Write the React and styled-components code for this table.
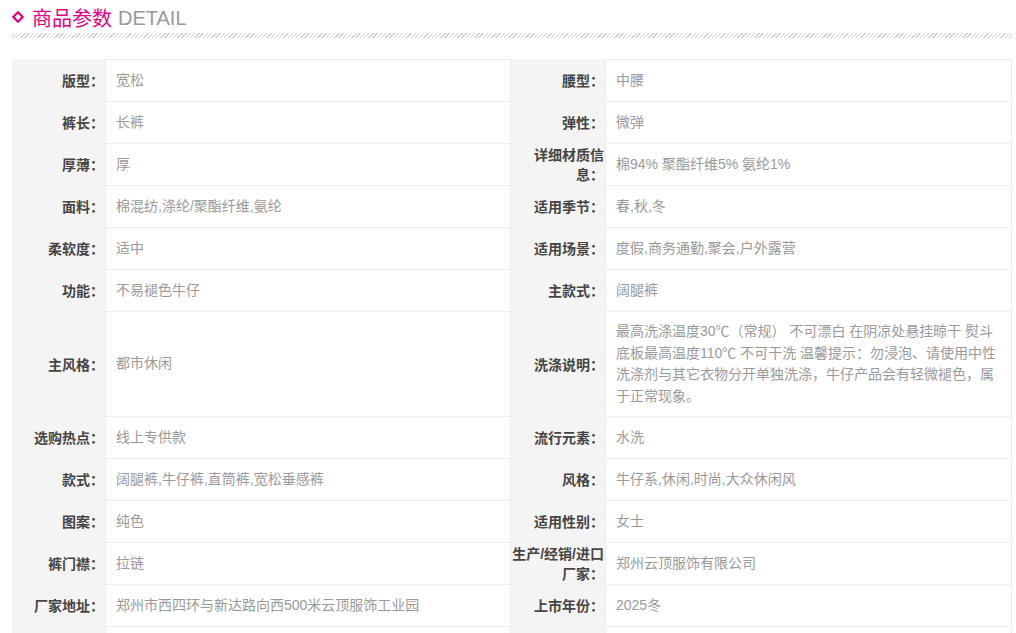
import React from "react";
import styled, { createGlobalStyle } from "styled-components";

const Global = createGlobalStyle`
  html, body { margin: 0; padding: 0; background: #fff; }
  body { font-family: "Liberation Sans", "Noto Sans CJK SC", sans-serif; }
`;

const Page = styled.div`
  padding: 6px 4px 0 12px;
  width: 1000px;
`;

const Header = styled.div`
  display: flex;
  align-items: center;
  height: 24px;
  font-size: 20px;
  line-height: 24px;
`;

const Diamond = styled.svg`
  width: 12px;
  height: 12px;
  margin: -2px 8px 0 0;
  flex: none;
`;

const Title = styled.span`
  color: #e4007f;
  font-family: "Noto Sans CJK SC", sans-serif;
`;

const Sub = styled.span`
  color: #999;
  margin-left: 6px;
  font-family: "Liberation Sans", sans-serif;
`;

const Hatch = styled.div`
  margin-top: 3px;
  height: 5px;
  background: repeating-linear-gradient(
    135deg,
    #cfcfcf 0,
    #cfcfcf 1px,
    transparent 1px,
    transparent 3px
  );
`;

const Grid = styled.div`
  margin-top: 21px;
  display: grid;
  grid-template-columns: 93px 406px 94px 407px;
  font-size: 14px;
`;

const Label = styled.div`
  box-sizing: border-box;
  min-height: ${(p) => (p.$first ? 43 : 42)}px;
  background: #f4f4f4;
  display: flex;
  align-items: center;
  justify-content: flex-end;
  padding: 0 1px 0 0;
  font-weight: bold;
  color: #454545;
  line-height: 20px;
  text-align: right;
`;

const Value = styled.div`
  box-sizing: border-box;
  min-height: ${(p) => (p.$first ? 43 : 42)}px;
  display: flex;
  align-items: center;
  padding: 9px 10px;
  border: 1px solid #ececec;
  border-top: ${(p) => (p.$first ? "1px solid #ececec" : "none")};
  color: #9a9a9a;
  line-height: 21.5px;
`;

const rows = [
  ["版型", "宽松", "腰型", "中腰"],
  ["裤长", "长裤", "弹性", "微弹"],
  ["厚薄", "厚", "详细材质信息", "棉94% 聚酯纤维5% 氨纶1%"],
  ["面料", "棉混纺,涤纶/聚酯纤维,氨纶", "适用季节", "春,秋,冬"],
  ["柔软度", "适中", "适用场景", "度假,商务通勤,聚会,户外露营"],
  ["功能", "不易褪色牛仔", "主款式", "阔腿裤"],
  [
    "主风格",
    "都市休闲",
    "洗涤说明",
    "最高洗涤温度30℃（常规） 不可漂白 在阴凉处悬挂晾干 熨斗底板最高温度110℃ 不可干洗 温馨提示：勿浸泡、请使用中性洗涤剂与其它衣物分开单独洗涤，牛仔产品会有轻微褪色，属于正常现象。",
  ],
  ["选购热点", "线上专供款", "流行元素", "水洗"],
  ["款式", "阔腿裤,牛仔裤,直筒裤,宽松垂感裤", "风格", "牛仔系,休闲,时尚,大众休闲风"],
  ["图案", "纯色", "适用性别", "女士"],
  ["裤门襟", "拉链", "生产/经销/进口厂家", "郑州云顶服饰有限公司"],
  ["厂家地址", "郑州市西四环与新达路向西500米云顶服饰工业园", "上市年份", "2025冬"],
  ["", "", "", ""],
];

export default function App() {
  return (
    <Page>
      <Global />
      <Header>
        <Diamond viewBox="0 0 12 12">
          <path d="M6 1.3 L10.7 6 L6 10.7 L1.3 6 Z" fill="none" stroke="#e4007f" strokeWidth="2.2" />
        </Diamond>
        <Title>商品参数</Title>
        <Sub>DETAIL</Sub>
      </Header>
      <Hatch />
      <Grid>
        {rows.map(([l1, v1, l2, v2], i) => (
          <React.Fragment key={i}>
            <Label $first={i === 0}>{l1 ? `${l1}：` : ""}</Label>
            <Value $first={i === 0}>{v1}</Value>
            <Label $first={i === 0}>{l2 ? `${l2}：` : ""}</Label>
            <Value $first={i === 0}>{v2}</Value>
          </React.Fragment>
        ))}
      </Grid>
    </Page>
  );
}
